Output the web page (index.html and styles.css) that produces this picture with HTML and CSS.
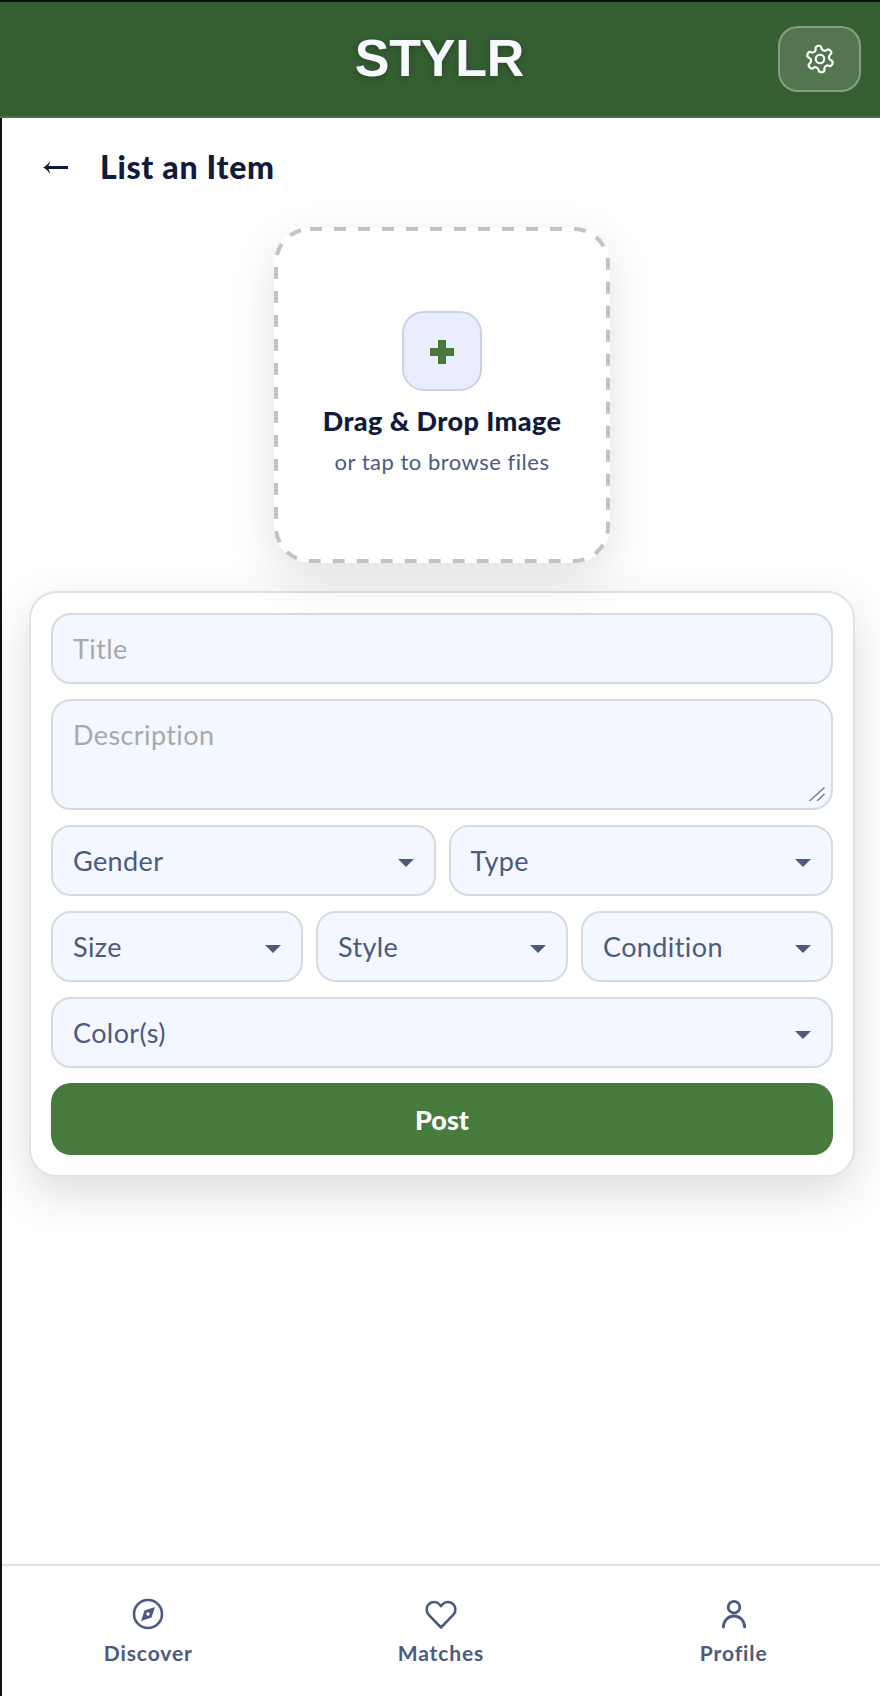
FILE: index.html
```html
<!DOCTYPE html>
<html lang="en">
<head>
<meta charset="utf-8">
<title>STYLR</title>
<link rel="stylesheet" href="styles.css">
</head>
<body>
<div class="app">
  <header class="topbar">
    <h1 class="logo">STYLR</h1>
    <button class="settings" type="button" aria-label="Settings">
      <svg class="gear" viewBox="0 0 24 24" fill="none" stroke="currentColor" stroke-width="1.6" stroke-linecap="round" stroke-linejoin="round"><g transform="rotate(-8 12 12)"><path d="M12.22 2h-.44a2 2 0 0 0-2 2v.18a2 2 0 0 1-1 1.73l-.43.25a2 2 0 0 1-2 0l-.15-.08a2 2 0 0 0-2.73.73l-.22.38a2 2 0 0 0 .73 2.73l.15.1a2 2 0 0 1 1 1.72v.51a2 2 0 0 1-1 1.74l-.15.09a2 2 0 0 0-.73 2.73l.22.38a2 2 0 0 0 2.73.73l.15-.08a2 2 0 0 1 2 0l.43.25a2 2 0 0 1 1 1.73V20a2 2 0 0 0 2 2h.44a2 2 0 0 0 2-2v-.18a2 2 0 0 1 1-1.73l.43-.25a2 2 0 0 1 2 0l.15.08a2 2 0 0 0 2.73-.73l.22-.39a2 2 0 0 0-.73-2.73l-.15-.08a2 2 0 0 1-1-1.74v-.5a2 2 0 0 1 1-1.74l.15-.09a2 2 0 0 0 .73-2.73l-.22-.38a2 2 0 0 0-2.73-.73l-.15.08a2 2 0 0 1-2 0l-.43-.25a2 2 0 0 1-1-1.73V4a2 2 0 0 0-2-2z"/><circle cx="12" cy="12" r="3.2"/></g></svg>
    </button>
  </header>

  <main class="content">
    <div class="title-row">
      <svg class="back" viewBox="0 0 25 13"><path d="M0 6.5 C2.5 5.4 5 3 7 0 C6.8 2 6.2 3.6 5.4 5 H25 V8 H5.4 C6.2 9.4 6.8 11 7 13 C5 10 2.5 7.6 0 6.5 Z"/></svg>
      <h2 class="page-title">List an Item</h2>
    </div>

    <div class="dropzone">
      <svg class="dash" viewBox="0 0 336 336"><rect x="2" y="2" width="332" height="332" rx="34"/></svg>
      <div class="plus-tile">
        <svg class="plus" viewBox="0 0 24 24"><path d="M8 0h8v8h8v8h-8v8H8v-8H0V8h8z"/></svg>
      </div>
      <div class="drop-title">Drag &amp; Drop Image</div>
      <div class="drop-sub">or tap to browse files</div>
    </div>

    <form class="card">
      <input class="field" type="text" placeholder="Title">
      <div class="area-wrap">
        <textarea class="field area" placeholder="Description"></textarea>
        <svg class="grip" viewBox="0 0 16 14"><path d="M0.5 14 L15.5 0.5 M8 14 L15.5 7"/></svg>
      </div>
      <div class="row">
        <div class="select"><span>Gender</span></div>
        <div class="select"><span>Type</span></div>
      </div>
      <div class="row">
        <div class="select"><span>Size</span></div>
        <div class="select"><span>Style</span></div>
        <div class="select"><span>Condition</span></div>
      </div>
      <div class="row">
        <div class="select"><span>Color(s)</span></div>
      </div>
      <button class="post" type="button">Post</button>
    </form>
  </main>

  <nav class="tabs">
    <a class="tab">
      <svg class="tab-icon" viewBox="0 0 32 32" fill="none" stroke="currentColor" stroke-width="2.6"><circle cx="16" cy="16" r="14"/><path d="M23 9 L19.5 19.5 L9 23 L12.5 12.5 Z" fill="currentColor" stroke="none"/><circle cx="16" cy="16" r="1.7" fill="#fff" stroke="none"/></svg>
      <span>Discover</span>
    </a>
    <a class="tab">
      <svg class="tab-icon" viewBox="0 0 32 32" fill="none" stroke="currentColor" stroke-width="2.6" stroke-linejoin="round" stroke-linecap="round"><path d="M16 29.5 L3.8 16.9 C0.8 13.5 1 8.7 4 5.9 C7.2 3.1 12 3.5 14.6 6.5 L16 8.1 L17.4 6.5 C20 3.5 24.8 3.1 28 5.9 C31 8.7 31.2 13.5 28.2 16.9 Z"/></svg>
      <span>Matches</span>
    </a>
    <a class="tab">
      <svg class="tab-icon" viewBox="0 0 32 32" fill="none" stroke="currentColor" stroke-width="2.8" stroke-linecap="round"><circle cx="16" cy="9.2" r="5.8"/><path d="M5.4 29 C5.4 23 10 18 16 18 C22 18 26.6 23 26.6 29"/></svg>
      <span>Profile</span>
    </a>
  </nav>
</div>
</body>
</html>
```

FILE: styles.css
```css
* { box-sizing: border-box; }
html, body { margin: 0; padding: 0; }
body { font-family: "Lato", "Noto Sans", sans-serif; background: #0b140d; color: #101a3a; }

.app { height: 1696px; display: flex; flex-direction: column; padding-top: 2px; }

.topbar {
  height: 116px; flex: none; background: #355e32; border-bottom: 2px solid #4a6f47;
  display: flex; align-items: center; justify-content: center; position: relative;
}
.logo {
  margin: 0 0 2px -1px; font-family: "Liberation Sans", Arial, sans-serif; font-weight: 700; font-size: 52px; line-height: 1;
  letter-spacing: -0.2px; color: #f7f9ff; text-shadow: 0 2px 6px rgba(0,0,0,.25);
}
.settings {
  position: absolute; right: 19px; top: 24px; width: 83px; height: 66px; padding: 0;
  display: flex; align-items: center; justify-content: center; color: #fff;
  background: rgba(255,255,255,.15); border: 2px solid rgba(255,255,255,.3); border-radius: 20px;
}
.gear { width: 32px; height: 32px; }

.content { flex: 1; background: #fff; margin-left: 2px; padding: 0 25px 0 27px; display: flex; flex-direction: column; }

.title-row { display: flex; align-items: center; height: 98px; padding: 0 0 0 14px; flex: none; }
.back { width: 25px; height: 13px; fill: #101a3a; margin-right: 32px; flex: none; }
.page-title { margin: 0; font-size: 32px; font-weight: 900; line-height: 1; letter-spacing: .7px; color: #101a3a; }

.dropzone {
  width: 336px; height: 336px; margin: 11px auto 0; padding-bottom: 2px; flex: none; background: #fff;
  border-radius: 36px; position: relative;
  box-shadow: 0 16px 48px rgba(0,0,0,.12);
  display: flex; flex-direction: column; align-items: center; justify-content: center;
}
.dash { position: absolute; left: 0; top: 0; width: 336px; height: 336px; fill: none; stroke: #bcc8bc; stroke-width: 4; stroke-dasharray: 12 12; }
.plus-tile {
  width: 80px; height: 80px; border-radius: 22px; background: #e9edfc; border: 2px solid #c9d3e6;
  display: flex; align-items: center; justify-content: center;
}
.plus { width: 24px; height: 24px; margin-top: 2px; fill: #477a3d; }
.drop-title { margin-top: 13px; font-size: 27px; font-weight: 900; line-height: 34px; letter-spacing: .4px; color: #101a3a; }
.drop-sub { margin-top: 9px; font-size: 22px; line-height: 30px; letter-spacing: .5px; color: #4c5a80; }

.card {
  flex: none; margin-top: 28px; padding: 20px; background: #fff;
  border: 2px solid #dfe3e4; border-radius: 28px;
  box-shadow: 0 16px 48px rgba(0,0,0,.14);
  display: flex; flex-direction: column; gap: 15px;
}
.field, .select {
  display: block; width: 100%; height: 71px; background: #f3f7ff; border: 2px solid #d6dbe0; border-radius: 20px;
  font-family: inherit; font-size: 27px; letter-spacing: .4px; color: #4c5a80; padding: 0 20px; outline: none;
}
.field::placeholder { color: #a9a9a9; opacity: 1; }
.area-wrap { position: relative; height: 111px; }
.area { height: 111px; padding-top: 18px; resize: none; line-height: 32px; }
.grip { position: absolute; right: 8px; bottom: 9px; width: 16px; height: 14px; fill: none; stroke: #808080; stroke-width: 1.5; }
.row { display: flex; gap: 13px; }
.select { flex: 1 1 0; min-width: 0; display: flex; align-items: center; position: relative; }
.select::after {
  content: ""; position: absolute; right: 20px; top: 50%; margin-top: -2px;
  border-left: 8px solid transparent; border-right: 8px solid transparent; border-top: 8px solid #4c5a80;
}
.post {
  height: 72px; border: 0; border-radius: 20px; background: #477a3d; color: #fff;
  font-family: inherit; font-size: 27px; font-weight: 900; padding: 0;
}

.tabs {
  flex: none; height: 132px; margin-left: 2px; background: #fff; border-top: 2px solid #dfe3e4;
  display: grid; grid-template-columns: repeat(3, 1fr);
}
.tab { display: flex; flex-direction: column; align-items: center; padding-top: 32px; color: #4c5a80; }
.tab-icon { width: 32px; height: 32px; display: block; }
.tab span { margin-top: 9px; font-size: 21px; font-weight: 700; line-height: 28px; letter-spacing: .9px; }
```
